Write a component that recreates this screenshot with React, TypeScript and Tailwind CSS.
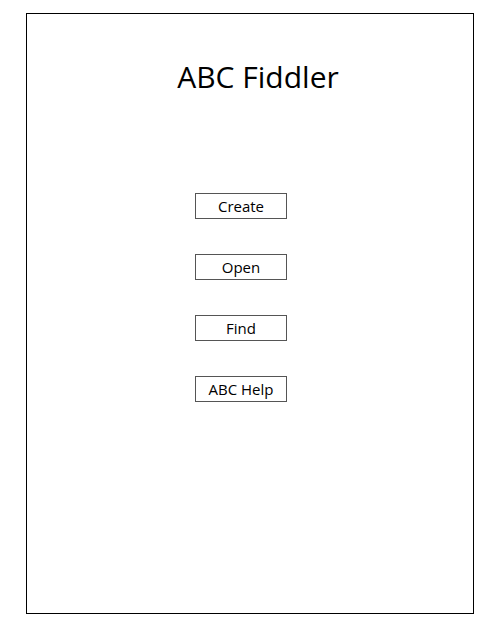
export default function App() {
  const buttons = ["Create", "Open", "Find", "ABC Help"];
  return (
    <div className="w-[500px] h-[625px] bg-white pt-[13px] pl-[26px]" style={{ fontFamily: '"Open Sans", sans-serif' }}>
      <div className="w-[448px] h-[601px] border border-black flex flex-col">
        <div className="mt-[43px] h-[40px] leading-[40px] text-[30px] text-black text-center pl-[16px]">
          ABC Fiddler
        </div>
        <div className="mt-[96px] ml-[168px] flex flex-col gap-[35px]">
          {buttons.map((b) => (
            <div
              key={b}
              className="w-[92px] h-[26px] border-[1.5px] border-[#555555] flex items-center justify-center text-[15px] text-black leading-none"
            >
              {b}
            </div>
          ))}
        </div>
      </div>
    </div>
  );
}
